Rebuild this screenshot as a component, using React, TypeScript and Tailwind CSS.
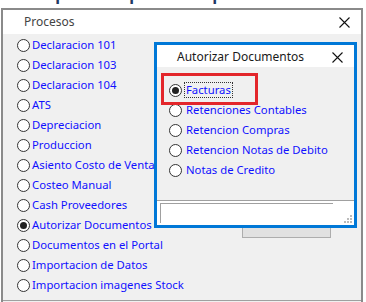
import React from "react";

const procesos = [
  "Declaracion 101",
  "Declaracion 103",
  "Declaracion 104",
  "ATS",
  "Depreciacion",
  "Produccion",
  "Asiento Costo de Ventas",
  "Costeo Manual",
  "Cash Proveedores",
  "Autorizar Documentos",
  "Documentos en el Portal",
  "Importacion de Datos",
  "Importacion imagenes Stock",
];

const documentos = [
  "Facturas",
  "Retenciones Contables",
  "Retencion Compras",
  "Retencion Notas de Debito",
  "Notas de Credito",
];

function Radio({ checked }: { checked?: boolean }) {
  return (
    <span className="w-[13px] h-[13px] rounded-full border border-[#333] bg-white flex items-center justify-center shrink-0">
      {checked && <span className="w-[7px] h-[7px] rounded-full bg-[#222]" />}
    </span>
  );
}

function CloseX() {
  return (
    <svg width="11" height="11" viewBox="0 0 11 11">
      <path d="M0.5 0.5 L10.5 10.5 M10.5 0.5 L0.5 10.5" stroke="#111" strokeWidth="1.1" />
    </svg>
  );
}

export default function App() {
  return (
    <div
      className="relative w-[366px] h-[302px] overflow-hidden bg-white"
      style={{ fontFamily: '"Noto Sans", "DejaVu Sans", sans-serif' }}
    >
      {/* texto recortado arriba */}
      <div className="h-[7px] overflow-hidden">
        <div className="-mt-[16px] whitespace-nowrap text-[16px] leading-[20px] font-bold text-[#1f3864] pl-[1px] tracking-[0.3px]">
          En la opción de procesos quedan deshabilitadas las opciones de la
        </div>
      </div>

      {/* ventana Procesos */}
      <div className="mt-[1px] ml-[1px] w-[362px] h-[294px] border-2 border-b-0 border-[#8a8a8a] flex flex-col">
        <div className="h-[24px] bg-white flex items-center justify-between pl-[21px] pr-[11px] shrink-0">
          <span className="text-[12px] text-[#444]">Procesos</span>
          <CloseX />
        </div>
        <div className="flex-1 bg-[#f0f0f0] pt-[1px] pl-[14px] flex flex-col">
          {procesos.map((p, i) => (
            <div key={p} className="h-[20px] flex items-center gap-[2px] whitespace-nowrap">
              <Radio checked={i === 9} />
              <span className="text-[11.3px] text-[#1010ff]">{p}</span>
            </div>
          ))}
          <div className="mt-auto mb-[1px] -ml-[14px] h-[1px] bg-[#a0a0a0]" />
        </div>
      </div>

      {/* boton detras del dialogo */}
      <div className="absolute left-[242px] top-[212px] w-[89px] h-[26px] bg-[#e1e1e1] border border-[#adadad]" />

      {/* dialogo Autorizar Documentos */}
      <div className="absolute left-[154px] top-[42px] w-[203px] h-[186px] border-[3px] border-[#0078d7] flex flex-col">
        <div className="h-[22px] bg-white flex items-center justify-between pl-[20px] pr-[11px] pt-[2px] shrink-0">
          <span className="text-[12px] text-[#1a1a1a]">Autorizar Documentos</span>
          <CloseX />
        </div>
        <div className="flex-1 bg-[#f0f0f0] pt-[13px] pl-[12px] flex flex-col">
          {documentos.map((d, i) => (
            <div key={d} className="h-[20px] flex items-center gap-[2px] whitespace-nowrap">
              <Radio checked={i === 0} />
              <span
                className={
                  "text-[11.3px] text-[#1010ff] leading-[14px] px-[1px] " +
                  (i === 0 ? "border border-dotted border-[#333]" : "border border-transparent")
                }
              >
                {d}
              </span>
            </div>
          ))}
        </div>
        <div className="h-[1px] bg-[#a0a0a0] shrink-0" />
        <div className="h-[24px] bg-white shrink-0 relative pt-[2px] pl-[3px]">
          <div className="w-[173px] h-[20px] border-t border-l border-[#a0a0a0]" />
          <div className="absolute right-[2px] bottom-[2px] grid grid-cols-3 gap-[1px]">
            <span />
            <span />
            <span className="w-[2px] h-[2px] bg-[#bbb]" />
            <span />
            <span className="w-[2px] h-[2px] bg-[#bbb]" />
            <span className="w-[2px] h-[2px] bg-[#bbb]" />
            <span className="w-[2px] h-[2px] bg-[#bbb]" />
            <span className="w-[2px] h-[2px] bg-[#bbb]" />
            <span className="w-[2px] h-[2px] bg-[#bbb]" />
          </div>
        </div>
        {/* recuadro rojo */}
        <div className="absolute left-[4px] top-[28px] w-[97px] h-[32px] border-[3px] border-[#e3262b]" />
      </div>
    </div>
  );
}
